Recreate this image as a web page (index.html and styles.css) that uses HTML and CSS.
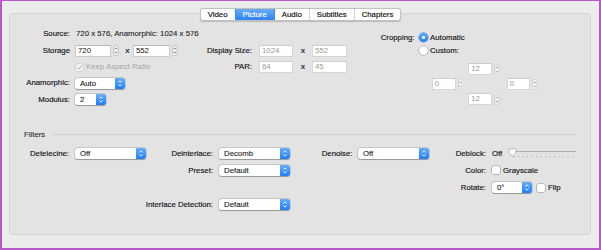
FILE: index.html
```html
<!DOCTYPE html>
<html>
<head>
<meta charset="utf-8">
<title>Picture</title>
<link rel="stylesheet" href="styles.css">
</head>
<body>
<div class="frame">
  <div class="tabs">
    <span class="tab">Video</span><span class="tab sel">Picture</span><span class="tab">Audio</span><span class="tab">Subtitles</span><span class="tab">Chapters</span>
  </div>
  <div class="panel">
    <div class="top">
      <div class="dims">
        <span class="lbl">Source:</span>
        <span class="srcval">720 x 576, Anamorphic: 1024 x 576</span>
        <span></span><span></span>

        <span class="lbl">Storage</span>
        <span class="ctl">
          <span class="field w36">720</span>
          <svg class="stepper" viewBox="0 0 6 12"><rect x="0.4" y="0.4" width="5.2" height="11.2" rx="2.6" fill="#f6f6f6" stroke="#a6a6a6" stroke-width="0.6"/><path d="M1.7 4.5 L3 3.1 L4.3 4.5 M1.7 7.5 L3 8.9 L4.3 7.5" fill="none" stroke="#555" stroke-width="0.8"/></svg>
          <span class="times t1">x</span>
          <span class="field w37">552</span>
          <svg class="stepper" viewBox="0 0 6 12"><rect x="0.4" y="0.4" width="5.2" height="11.2" rx="2.6" fill="#f6f6f6" stroke="#a6a6a6" stroke-width="0.6"/><path d="M1.7 4.5 L3 3.1 L4.3 4.5 M1.7 7.5 L3 8.9 L4.3 7.5" fill="none" stroke="#555" stroke-width="0.8"/></svg>
        </span>
        <span class="lbl">Display Size:</span>
        <span class="ctl wide">
          <span class="field dis w34">1024</span>
          <span class="times t2">x</span>
          <span class="field dis w35">552</span>
        </span>

        <span></span>
        <span class="ctl">
          <span class="check dis"><svg viewBox="0 0 7 7"><path d="M1.5 3.6 L3 5 L5.6 1.6" fill="none" stroke="#a9a9a9" stroke-width="0.9"/></svg></span>
          <span class="dimtext">Keep Aspect Ratio</span>
        </span>
        <span class="lbl">PAR:</span>
        <span class="ctl wide">
          <span class="field dis w34">64</span>
          <span class="times t2">x</span>
          <span class="field dis w35">45</span>
        </span>

        <span class="lbl">Anamorphic:</span>
        <span class="ctl">
          <span class="popup p-ana"><span class="pv">Auto</span><span class="pa"><svg viewBox="0 0 10 11"><path d="M3.4 4.4 L5 2.9 L6.6 4.4 M3.4 6.6 L5 8.1 L6.6 6.6" fill="none" stroke="#fff" stroke-width="0.9"/></svg></span></span>
        </span>
        <span></span><span></span>

        <span class="lbl">Modulus:</span>
        <span class="ctl">
          <span class="popup p-mod"><span class="pv">2</span><span class="pa"><svg viewBox="0 0 10 11"><path d="M3.4 4.4 L5 2.9 L6.6 4.4 M3.4 6.6 L5 8.1 L6.6 6.6" fill="none" stroke="#fff" stroke-width="0.9"/></svg></span></span>
        </span>
        <span></span><span></span>
      </div>

      <div class="crop">
        <span class="lbl">Cropping:</span>
        <span class="radio-row"><span class="radio on"></span>Automatic</span>
        <span></span>
        <span class="radio-row"><span class="radio"></span>Custom:</span>
        <span></span>
        <div class="cropgrid">
          <span class="cf c-top"><span class="field dis w24">12</span><svg class="stepper sm" viewBox="0 0 6 12"><rect x="0.4" y="0.4" width="5.2" height="11.2" rx="2.6" fill="#f3f3f3" stroke="#bcbcbc" stroke-width="0.6"/><path d="M1.7 4.5 L3 3.1 L4.3 4.5 M1.7 7.5 L3 8.9 L4.3 7.5" fill="none" stroke="#8c8c8c" stroke-width="0.8"/></svg></span>
          <span class="cf c-left"><span class="field dis w24">0</span><svg class="stepper sm" viewBox="0 0 6 12"><rect x="0.4" y="0.4" width="5.2" height="11.2" rx="2.6" fill="#f3f3f3" stroke="#bcbcbc" stroke-width="0.6"/><path d="M1.7 4.5 L3 3.1 L4.3 4.5 M1.7 7.5 L3 8.9 L4.3 7.5" fill="none" stroke="#8c8c8c" stroke-width="0.8"/></svg></span>
          <span class="cf c-right"><span class="field dis w24">0</span><svg class="stepper sm" viewBox="0 0 6 12"><rect x="0.4" y="0.4" width="5.2" height="11.2" rx="2.6" fill="#f3f3f3" stroke="#bcbcbc" stroke-width="0.6"/><path d="M1.7 4.5 L3 3.1 L4.3 4.5 M1.7 7.5 L3 8.9 L4.3 7.5" fill="none" stroke="#8c8c8c" stroke-width="0.8"/></svg></span>
          <span class="cf c-bottom"><span class="field dis w24">12</span><svg class="stepper sm" viewBox="0 0 6 12"><rect x="0.4" y="0.4" width="5.2" height="11.2" rx="2.6" fill="#f3f3f3" stroke="#bcbcbc" stroke-width="0.6"/><path d="M1.7 4.5 L3 3.1 L4.3 4.5 M1.7 7.5 L3 8.9 L4.3 7.5" fill="none" stroke="#8c8c8c" stroke-width="0.8"/></svg></span>
        </div>
      </div>
    </div>

    <div class="fhead"><span class="ftitle">Filters</span><span class="line"></span></div>

    <div class="fgrid">
      <span class="lbl">Detelecine:</span>
      <span class="fc"><span class="popup p-flt"><span class="pv">Off</span><span class="pa"><svg viewBox="0 0 10 11"><path d="M3.4 4.4 L5 2.9 L6.6 4.4 M3.4 6.6 L5 8.1 L6.6 6.6" fill="none" stroke="#fff" stroke-width="0.9"/></svg></span></span></span>
      <span class="lbl">Deinterlace:</span>
      <span class="fc"><span class="popup p-flt"><span class="pv">Decomb</span><span class="pa"><svg viewBox="0 0 10 11"><path d="M3.4 4.4 L5 2.9 L6.6 4.4 M3.4 6.6 L5 8.1 L6.6 6.6" fill="none" stroke="#fff" stroke-width="0.9"/></svg></span></span></span>
      <span class="lbl">Denoise:</span>
      <span class="fc c6"><span class="popup p-flt"><span class="pv">Off</span><span class="pa"><svg viewBox="0 0 10 11"><path d="M3.4 4.4 L5 2.9 L6.6 4.4 M3.4 6.6 L5 8.1 L6.6 6.6" fill="none" stroke="#fff" stroke-width="0.9"/></svg></span></span></span>
      <span class="lbl">Deblock:</span>
      <span class="fc">
        <span class="offtxt">Off</span>
        <svg class="slider" viewBox="0 0 70 11">
          <line x1="5" y1="3.5" x2="69" y2="3.5" stroke="#adadad" stroke-width="1"/>
          <g stroke="#8e8e8e" stroke-width="0.6">
            <line x1="7" y1="8" x2="7" y2="9.3"/><line x1="11.5" y1="8" x2="11.5" y2="9.3"/><line x1="16" y1="8" x2="16" y2="9.3"/><line x1="20.5" y1="8" x2="20.5" y2="9.3"/><line x1="25" y1="8" x2="25" y2="9.3"/><line x1="29.5" y1="8" x2="29.5" y2="9.3"/><line x1="34" y1="8" x2="34" y2="9.3"/><line x1="38.5" y1="8" x2="38.5" y2="9.3"/><line x1="43" y1="8" x2="43" y2="9.3"/><line x1="47.5" y1="8" x2="47.5" y2="9.3"/><line x1="52" y1="8" x2="52" y2="9.3"/><line x1="56.5" y1="8" x2="56.5" y2="9.3"/><line x1="61" y1="8" x2="61" y2="9.3"/><line x1="65.5" y1="8" x2="65.5" y2="9.3"/>
          </g>
          <path d="M1.8 1.4 Q1.8 0.8 2.4 0.8 L8.4 0.8 Q9 0.8 9 1.4 L9 4.6 L5.4 8.2 L1.8 4.6 Z" fill="#fbfbfb" stroke="#999" stroke-width="0.6"/>
        </svg>
      </span>

      <span></span><span></span>
      <span class="lbl">Preset:</span>
      <span class="fc"><span class="popup p-flt"><span class="pv">Default</span><span class="pa"><svg viewBox="0 0 10 11"><path d="M3.4 4.4 L5 2.9 L6.6 4.4 M3.4 6.6 L5 8.1 L6.6 6.6" fill="none" stroke="#fff" stroke-width="0.9"/></svg></span></span></span>
      <span></span><span></span>
      <span class="lbl">Color:</span>
      <span class="fc"><span class="check"></span><span class="ctext">Grayscale</span></span>

      <span></span><span></span><span></span><span></span><span></span><span></span>
      <span class="lbl">Rotate:</span>
      <span class="fc">
        <span class="popup p-rot"><span class="pv">0°</span><span class="pa"><svg viewBox="0 0 10 11"><path d="M3.4 4.4 L5 2.9 L6.6 4.4 M3.4 6.6 L5 8.1 L6.6 6.6" fill="none" stroke="#fff" stroke-width="0.9"/></svg></span></span>
        <span class="check flip"></span><span class="ctext">Flip</span>
      </span>

      <span></span>
      <span class="lbl wide-lbl">Interlace Detection:</span>
      <span class="fc"><span class="popup p-flt"><span class="pv">Default</span><span class="pa"><svg viewBox="0 0 10 11"><path d="M3.4 4.4 L5 2.9 L6.6 4.4 M3.4 6.6 L5 8.1 L6.6 6.6" fill="none" stroke="#fff" stroke-width="0.9"/></svg></span></span></span>
    </div>
  </div>
</div>
</body>
</html>
```

FILE: styles.css
```css
* { box-sizing: border-box; }
html, body { margin: 0; padding: 0; }
body {
  width: 601px;
  height: 250px;
  overflow: hidden;
  font-family: "Liberation Sans", Arial, sans-serif;
  font-size: 7.8px;
  color: #222;
}
.frame {
  width: 601px;
  height: 250px;
  background: #ececec;
  border: solid #b758c8;
  border-width: 1px 2px 2px 2px;
  display: flex;
  flex-direction: column;
}

/* segmented tabs */
.tabs {
  align-self: center;
  display: flex;
  margin-top: 7px;
  margin-bottom: -8px;
  height: 13px;
  position: relative;
  z-index: 1;
  background: #fff;
  border: 1px solid #c0c0c0;
  border-radius: 3px;
  box-shadow: 0 0.5px 1px rgba(0,0,0,0.18);
  overflow: hidden;
}
.tab {
  padding: 0 7px;
  line-height: 11px;
  color: #0d0d0d;
  border-left: 1px solid #d2d2d2;
  -webkit-text-stroke: 0.15px currentColor;
}
.tab:first-child { border-left: none; }
.tab.sel {
  background: linear-gradient(#6aacfb, #2d82f7);
  color: #fff;
  border-left-color: #3b8af7;
}
.tab.sel + .tab { border-left-color: #3b8af7; }

/* panel */
.panel {
  margin-left: 7px;
  width: 582px;
  height: 222px;
  background: #e3e3e3;
  border: 1px solid #d6d6d6;
  border-radius: 4px;
  display: flex;
  flex-direction: column;
}
.top {
  display: flex;
  align-items: flex-start;
  height: 114px;
}
.dims {
  display: grid;
  grid-template-columns: 60px 134px 48px 97px;
  grid-template-rows: repeat(5, 12px);
  row-gap: 4.4px;
  padding-top: 14.3px;
}
.lbl {
  text-align: right;
  white-space: nowrap;
  line-height: 12px;
  color: #151515;
  -webkit-text-stroke: 0.15px currentColor;
}
.srcval {
  padding-left: 6px;
  line-height: 12px;
  white-space: nowrap;
  color: #1e1e1e;
  -webkit-text-stroke: 0.1px currentColor;
}
.ctl {
  padding-left: 5px;
  display: flex;
  align-items: center;
  white-space: nowrap;
}
.ctl.wide { padding-left: 7px; }

.field {
  display: block;
  height: 12px;
  background: #fff;
  border: 1px solid #cbcbcb;
  border-top-color: #bbbbbb;
  line-height: 10px;
  padding-left: 2px;
  color: #111;
  white-space: nowrap;
}
.field.dis {
  color: #999;
  border-color: #d6d6d6;
  border-top-color: #cdcdcd;
}
.w24 { width: 24px; }
.w34 { width: 34px; }
.w35 { width: 35px; }
.w36 { width: 36px; }
.w37 { width: 37.4px; }

.stepper {
  display: block;
  margin-left: 2px;
  width: 5.6px;
  height: 11px;
}
.stepper.sm { margin-left: 2px; }

.times {
  font-weight: bold;
  color: #333;
  line-height: 12px;
}
.times.t1 { margin: 0 3.3px 0 6.7px; }
.times.t2 { margin: 0 7px 0 7.7px; }

.check {
  display: block;
  width: 8px;
  height: 8px;
  background: #fff;
  border-radius: 1.5px;
  box-shadow: 0 0 0 0.6px #9c9c9c, 0 0.5px 0.6px rgba(0,0,0,0.2);
}
.check.dis {
  width: 7px;
  height: 7px;
  margin-left: 0.7px;
  background: #f1f1f1;
  box-shadow: 0 0 0 0.6px #c6c6c6;
}
.check.dis svg { display: block; width: 7px; height: 7px; }
.dimtext { margin-left: 3.3px; color: #a6a6a6; line-height: 12px; }

/* popup buttons */
.popup {
  display: flex;
  height: 11px;
  background: #fff;
  border-radius: 2.5px;
  box-shadow: 0 0 0 0.5px rgba(0,0,0,0.22), 0 0.6px 0.8px rgba(0,0,0,0.25);
}
.popup .pv {
  flex: 1;
  padding-left: 5px;
  line-height: 11px;
  color: #161616;
  white-space: nowrap;
  -webkit-text-stroke: 0.1px currentColor;
}
.popup .pa {
  width: 10px;
  background: linear-gradient(#67aefc, #1d7ff8);
  border-radius: 0 2.5px 2.5px 0;
}
.popup .pa svg { display: block; width: 10px; height: 11px; }
.p-ana { width: 50px; }
.p-mod { width: 31px; }
.p-flt { width: 71px; }
.p-rot { width: 40px; }

/* cropping */
.crop {
  margin-left: 11px;
  padding-top: 17.8px;
  display: grid;
  grid-template-columns: 54.5px auto;
  grid-template-rows: 11px 11px auto;
  row-gap: 2.7px;
  column-gap: 4.3px;
}
.crop .lbl { line-height: 11px; }
.radio-row {
  display: flex;
  align-items: center;
  gap: 2.2px;
  line-height: 11px;
  white-space: nowrap;
  color: #151515;
  -webkit-text-stroke: 0.15px currentColor;
}
.radio {
  display: block;
  width: 9px;
  height: 9px;
  border-radius: 50%;
  background: #fff;
  box-shadow: 0 0 0 0.6px #9c9c9c, 0 0.5px 0.6px rgba(0,0,0,0.2);
}
.radio.on {
  background: radial-gradient(circle, #fff 0 1.3px, rgba(255,255,255,0) 1.7px), linear-gradient(#5ea9fb, #1f7ff7);
  box-shadow: 0 0 0 0.5px #2a78e0;
}
.cropgrid {
  grid-column: 2;
  margin-left: 12.9px;
  margin-top: 4.1px;
  display: grid;
  grid-template-columns: 36.6px 38.4px 31px;
  grid-template-rows: repeat(3, 12px);
  row-gap: 3px;
}
.cf { display: flex; align-items: center; }
.c-top { grid-column: 2; grid-row: 1; }
.c-left { grid-column: 1; grid-row: 2; }
.c-right { grid-column: 3; grid-row: 2; }
.c-bottom { grid-column: 2; grid-row: 3; }

/* filters */
.fhead {
  display: flex;
  align-items: center;
  height: 13px;
  padding: 0 14px;
}
.ftitle { color: #2a2a2a; line-height: 13px; -webkit-text-stroke: 0.1px currentColor; }
.fhead .line {
  flex: 1;
  height: 1px;
  margin-left: 7.8px;
  background: #d0d0d0;
}
.fgrid {
  display: grid;
  grid-template-columns: 59px 77px 67px 77px 62.5px 76.5px 57px 1fr;
  grid-template-rows: repeat(4, 11px);
  row-gap: 6.25px;
  margin-top: 6.5px;
}
.fgrid .lbl { line-height: 11px; }
.wide-lbl { grid-column: 2 / 4; }
.fc {
  padding-left: 6px;
  display: flex;
  align-items: center;
  white-space: nowrap;
}
.fc.c6 { padding-left: 5.5px; }
.offtxt { line-height: 11px; color: #151515; -webkit-text-stroke: 0.15px currentColor; }
.slider {
  display: block;
  width: 70px;
  height: 11px;
  margin-left: 5.2px;
}
.ctext { margin-left: 3px; line-height: 11px; color: #151515; -webkit-text-stroke: 0.15px currentColor; }
.check.flip { margin-left: 5px; }
```
